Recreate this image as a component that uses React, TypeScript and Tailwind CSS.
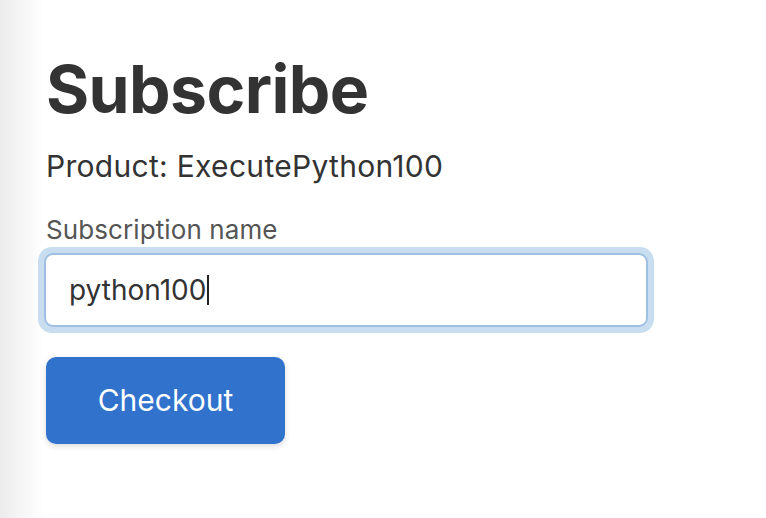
import { useState } from 'react'

export default function App() {
  const [name, setName] = useState('python100')

  return (
    <div className="relative min-h-[518px] w-full bg-white font-['Inter',sans-serif] text-[#333333]">
      {/* soft shade along the left edge */}
      <div className="pointer-events-none absolute inset-y-0 left-0 w-[44px] bg-gradient-to-r from-[#ececec] to-white" />
      <div className="relative pl-[46px] pt-[49px]">
        <h1 className="text-[66px] font-bold leading-[80px] tracking-[-0.6px] text-[#333333]">Subscribe</h1>
        <p className="mt-[19px] text-[30px] leading-[36px] tracking-[0.3px]">Product: ExecutePython100</p>

        <form onSubmit={(e) => e.preventDefault()} className="mt-[30px]">
          <label className="block text-[26px] leading-[32px] tracking-[0.1px] text-[#555555]">Subscription name</label>
          <div className="mt-[1px] -ml-[8px] w-[616px] rounded-[14px] bg-[#c8def0] p-[6px]">
            <div className="flex h-[74px] items-center rounded-[9px] border-2 border-[#9fc0e2] bg-white px-[23px]">
              <div className="relative flex-1">
                <input
                  value={name}
                  onChange={(e) => setName(e.target.value)}
                  className="w-full bg-transparent text-[28px] leading-[34px] text-[#333333] caret-transparent outline-none"
                />
                <div className="pointer-events-none absolute inset-0 flex items-center">
                  <span className="invisible whitespace-pre text-[28px]">{name}</span>
                  <span className="ml-[1px] h-[30px] w-[2px] bg-[#222222]" />
                </div>
              </div>
            </div>
          </div>
          <button
            type="submit"
            className="mt-[24px] h-[87px] w-[239px] rounded-[10px] bg-[#3172cd] text-[30px] text-white shadow-[0_2px_6px_rgba(0,0,0,0.15)]"
          >
            Checkout
          </button>
        </form>
      </div>
    </div>
  )
}
